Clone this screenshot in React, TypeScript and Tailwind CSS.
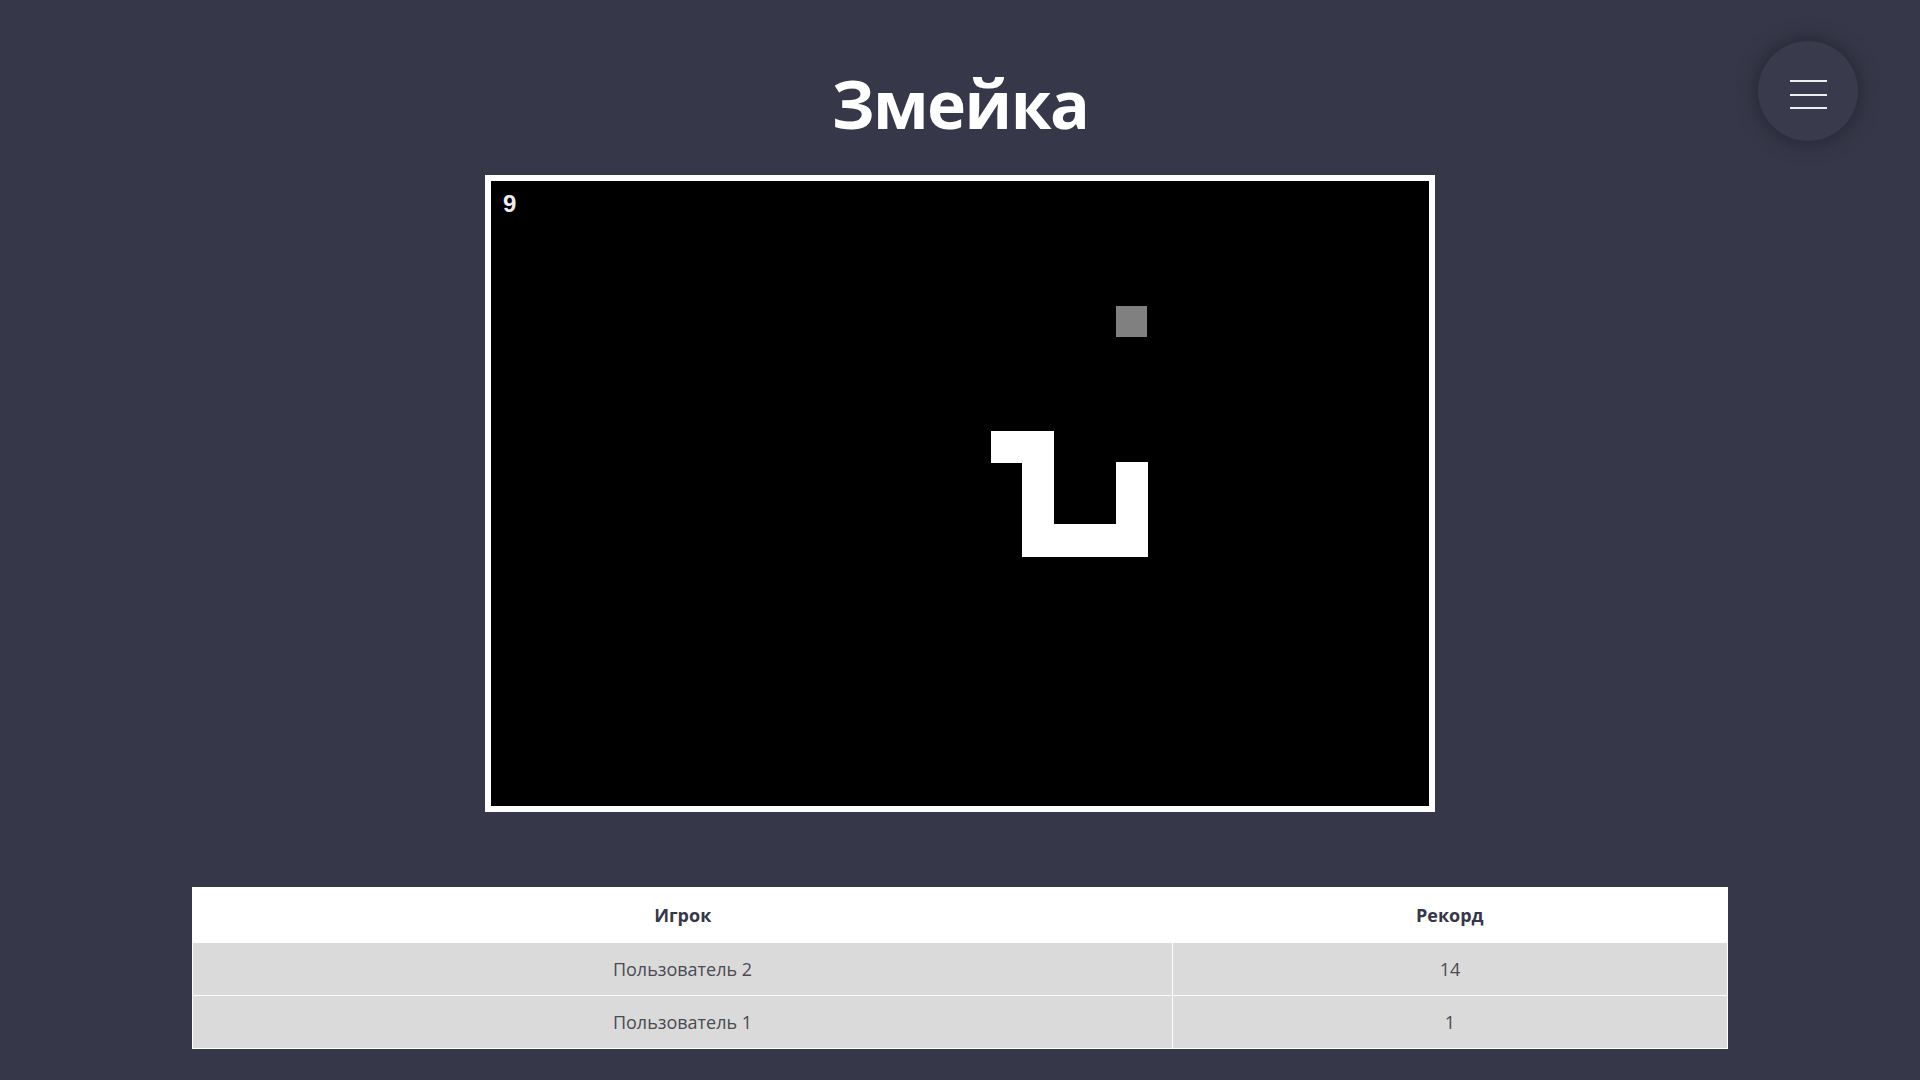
import React from 'react'

type Cell = [number, number]

const CELL = 31.25

// позиции в клетках поля 30x20
const snake: Cell[] = [
  [16, 8], [17, 8], [17, 9], [17, 10], [17, 11],
  [18, 11], [19, 11], [20, 11], [20, 10], [20, 9]
]
const food: Cell = [20, 4]

const records = [
  { name: 'Пользователь 2', score: 14 },
  { name: 'Пользователь 1', score: 1 }
]

const MenuButton = () => (
  <button className="absolute top-[41px] right-[62px] w-[100px] h-[100px] rounded-full bg-[#393a4c] shadow-[0_0_22px_rgba(0,0,0,0.35)] flex flex-col items-center pt-[39px] gap-[11.5px]">
    <span className="block w-[37px] h-[2px] bg-[#eeeeee]" />
    <span className="block w-[37px] h-[2px] bg-[#eeeeee]" />
    <span className="block w-[37px] h-[2px] bg-[#eeeeee]" />
  </button>
)

const Board = () => (
  <div className="relative border-[6px] border-white bg-black w-[950px] h-[637px]">
    <svg width={938} height={625} viewBox="0 0 938 625" className="block" shapeRendering="crispEdges">
      <rect
        x={food[0] * CELL}
        y={food[1] * CELL}
        width={CELL}
        height={CELL}
        fill="#808080"
      />
      {snake.map(([x, y]) => (
        <rect key={`${x}-${y}`} x={x * CELL - 0.5} y={y * CELL - 0.5} width={CELL + 1} height={CELL + 1} fill="#ffffff" />
      ))}
    </svg>
    {/* счёт */}
    <span className="absolute left-[12px] top-[11px] text-[24px] leading-none font-bold text-[#eeeeee] font-['Liberation_Sans',Arial,sans-serif]">
      9
    </span>
  </div>
)

export default function App() {
  return (
    <div className="relative min-h-screen bg-[#363748] font-['Open_Sans',sans-serif] flex flex-col items-center pt-[68px]">
      <MenuButton />

      <h1 className="h-[70px] text-[66px] leading-[70px] tracking-[-1.5px] font-bold text-white">Змейка</h1>

      <div className="mt-[37px]">
        <Board />
      </div>

      <table className="mt-[75px] w-[1536px] border border-white border-collapse text-[18px]">
        <thead>
          <tr className="bg-white h-[55px]">
            <th className="w-[980px] font-bold text-[#363748]">Игрок</th>
            <th className="font-bold text-[#363748]">Рекорд</th>
          </tr>
        </thead>
        <tbody>
          {records.map((r) => (
            <tr key={r.name} className="bg-[#dadada] h-[53px] border-t border-white">
              <td className="text-center text-[#4a4a52] border-r border-white">{r.name}</td>
              <td className="text-center text-[#4a4a52]">{r.score}</td>
            </tr>
          ))}
        </tbody>
      </table>
    </div>
  )
}
